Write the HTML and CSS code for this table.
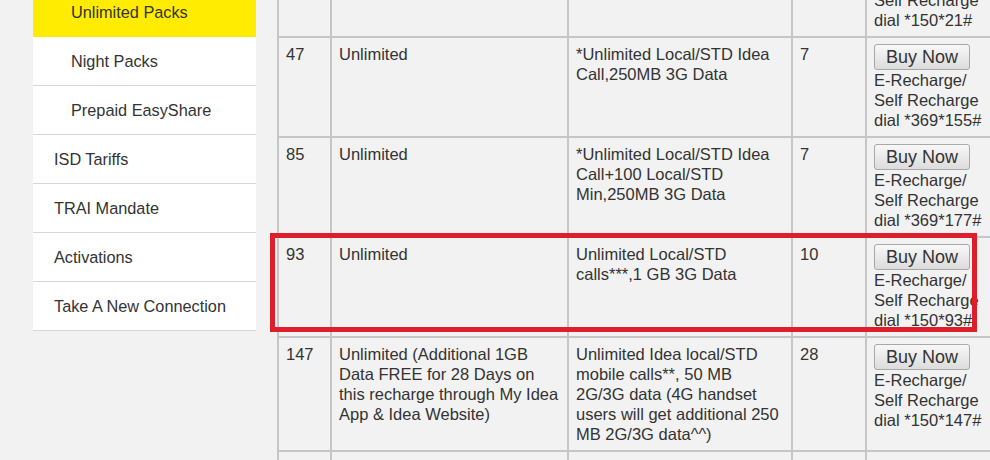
FILE: index.html
```html
<!DOCTYPE html>
<html lang="en">
<head>
    <meta charset="UTF-8">
    <title>Unlimited Packs</title>
    <link rel="stylesheet" href="styles.css">
</head>
<body>
    <div class="page">
        <ul class="side-nav">
            <li class="nav-item sub active">Unlimited Packs</li>
            <li class="nav-item sub">Night Packs</li>
            <li class="nav-item sub">Prepaid EasyShare</li>
            <li class="nav-item">ISD Tariffs</li>
            <li class="nav-item">TRAI Mandate</li>
            <li class="nav-item">Activations</li>
            <li class="nav-item">Take A New Connection</li>
        </ul>

        <div class="tariffs">
            <table class="tariff-table">
                <colgroup>
                    <col class="c-price">
                    <col class="c-talk">
                    <col class="c-benefit">
                    <col class="c-days">
                    <col class="c-buy">
                </colgroup>
                <tr>
                    <td></td>
                    <td></td>
                    <td></td>
                    <td></td>
                    <td>
                        <button class="buy-btn">Buy Now</button>
                        <div class="dial">E-Recharge/<br>Self Recharge<br>dial *150*21#</div>
                    </td>
                </tr>
                <tr>
                    <td>47</td>
                    <td>Unlimited</td>
                    <td>*Unlimited Local/STD Idea Call,250MB 3G Data</td>
                    <td>7</td>
                    <td>
                        <button class="buy-btn">Buy Now</button>
                        <div class="dial">E-Recharge/<br>Self Recharge<br>dial *369*155#</div>
                    </td>
                </tr>
                <tr>
                    <td>85</td>
                    <td>Unlimited</td>
                    <td>*Unlimited Local/STD Idea Call+100 Local/STD Min,250MB 3G Data</td>
                    <td>7</td>
                    <td>
                        <button class="buy-btn">Buy Now</button>
                        <div class="dial">E-Recharge/<br>Self Recharge<br>dial *369*177#</div>
                    </td>
                </tr>
                <tr>
                    <td>93</td>
                    <td>Unlimited</td>
                    <td>Unlimited Local/STD calls***,1 GB 3G Data</td>
                    <td>10</td>
                    <td>
                        <button class="buy-btn">Buy Now</button>
                        <div class="dial">E-Recharge/<br>Self Recharge<br>dial *150*93#</div>
                    </td>
                </tr>
                <tr>
                    <td>147</td>
                    <td>Unlimited (Additional 1GB Data FREE for 28 Days on this recharge through My Idea App &amp; Idea Website)</td>
                    <td>Unlimited Idea local/STD mobile calls**, 50 MB 2G/3G data (4G handset users will get additional 250 MB 2G/3G data^^)</td>
                    <td>28</td>
                    <td>
                        <button class="buy-btn">Buy Now</button>
                        <div class="dial">E-Recharge/<br>Self Recharge<br>dial *150*147#</div>
                    </td>
                </tr>
                <tr>
                    <td>&nbsp;</td>
                    <td></td>
                    <td></td>
                    <td></td>
                    <td></td>
                </tr>
            </table>
            <div class="highlight"></div>
        </div>
    </div>
</body>
</html>
```

FILE: styles.css
```css
body {
    margin: 0;
    background: #f2f2f2;
    font-family: 'Liberation Sans', Arial, sans-serif;
    color: #333;
    overflow: hidden;
}

.page {
    display: flex;
    align-items: flex-start;
    gap: 21px;
    padding-left: 33px;
}

/* left menu */
.side-nav {
    list-style: none;
    margin: -12px 0 0;
    padding: 0;
    width: 223px;
    flex-shrink: 0;
}

.nav-item {
    background: #fff;
    height: 48px;
    line-height: 48px;
    padding-left: 21px;
    font-size: 16.3px;
    border-bottom: 1px solid #d6d6d6;
}

.nav-item.sub {
    padding-left: 38px;
}

.nav-item.active {
    background: #ffec00;
    border-bottom-color: #ffec00;
}

/* tariff table */
.tariffs {
    position: relative;
    margin-top: -64px;
}

.tariff-table {
    border-collapse: collapse;
    table-layout: fixed;
    width: 740px;
    font-size: 16.5px;
    line-height: 20px;
}

.c-price { width: 53px; }
.c-talk { width: 237px; }
.c-benefit { width: 224px; }
.c-days { width: 74px; }
.c-buy { width: 152px; }

.tariff-table td {
    border: 2px solid #c6c6c6;
    padding: 6px 7px;
    vertical-align: top;
}

.buy-btn {
    display: block;
    width: 96px;
    height: 26px;
    padding: 0;
    font-family: 'Liberation Sans', Arial, sans-serif;
    font-size: 18px;
    color: #333;
    background: linear-gradient(#f8f8f8, #dcdcdc);
    border: 1px solid #a8a8a8;
    border-radius: 3px;
}

.dial {
    white-space: nowrap;
}

.highlight {
    position: absolute;
    left: -7px;
    top: 297px;
    width: 697px;
    height: 89px;
    border: 5px solid #dc1f2b;
}
```
